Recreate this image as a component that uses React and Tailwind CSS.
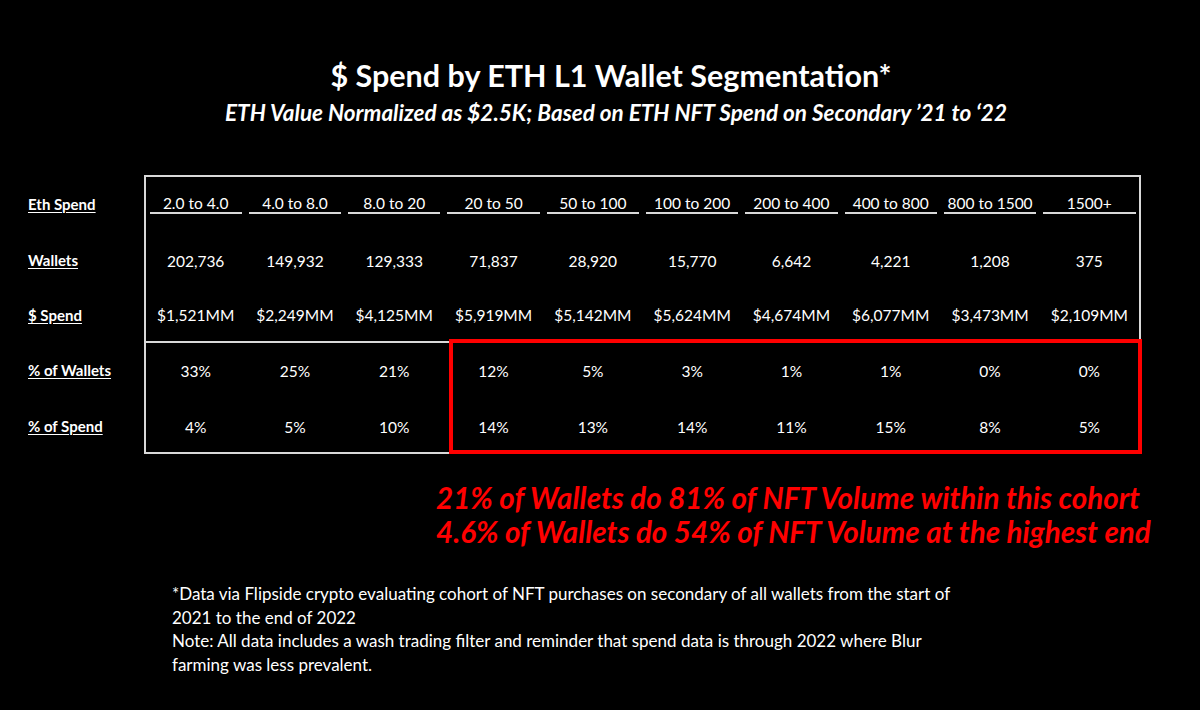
const RANGES = ['2.0 to 4.0', '4.0 to 8.0', '8.0 to 20', '20 to 50', '50 to 100', '100 to 200', '200 to 400', '400 to 800', '800 to 1500', '1500+']
const WALLETS = ['202,736', '149,932', '129,333', '71,837', '28,920', '15,770', '6,642', '4,221', '1,208', '375']
const SPEND = ['$1,521MM', '$2,249MM', '$4,125MM', '$5,919MM', '$5,142MM', '$5,624MM', '$4,674MM', '$6,077MM', '$3,473MM', '$2,109MM']
const PCT_WALLETS = ['33%', '25%', '21%', '12%', '5%', '3%', '1%', '1%', '0%', '0%']
const PCT_SPEND = ['4%', '5%', '10%', '14%', '13%', '14%', '11%', '15%', '8%', '5%']

function ValueRow({ values, className = '' }) {
  return (
    <div className={`grid grid-cols-10 text-[15.5px] leading-[18px] text-center ${className}`}>
      {values.map((v, i) => (
        <div key={i} className="whitespace-nowrap">{v}</div>
      ))}
    </div>
  )
}

export default function App() {
  return (
    <div className="w-[1200px] h-[710px] bg-black text-white overflow-hidden font-[Lato,sans-serif]">
      {/* heading */}
      <div className="pt-[57px] pl-[22px] text-center">
        <h1 className="text-[30.5px] leading-[36px] font-bold">$ Spend by ETH L1 Wallet Segmentation*</h1>
        <p className="mt-[6px] ml-[10px] text-[22.5px] leading-[27px] font-bold italic whitespace-nowrap">
          ETH Value Normalized as $2.5K; Based on ETH NFT Spend on Secondary ’21 to ‘22
        </p>
      </div>

      {/* table */}
      <div className="mt-[49px] flex pl-[28px]">
        <div className="w-[116px] pt-[20px] text-[15px] leading-[18px] font-bold">
          <div className="underline underline-offset-2">Eth Spend</div>
          <div className="mt-[38px] underline underline-offset-2">Wallets</div>
          <div className="mt-[37px] underline underline-offset-2">$ Spend</div>
          <div className="mt-[37px] underline underline-offset-2">% of Wallets</div>
          <div className="mt-[38px] underline underline-offset-2">% of Spend</div>
        </div>

        <div className="relative w-[997px] border-2 border-[#d9d9d9]">
          <div className="h-[164px]">
            <div className="grid grid-cols-10 pt-[17px] text-[15.5px] leading-[18px] text-center">
              {RANGES.map(r => (
                <div key={r} className="px-[3.5px]">
                  <div className="border-b-2 border-[#d9d9d9] whitespace-nowrap">{r}</div>
                </div>
              ))}
            </div>
            <ValueRow values={WALLETS} className="mt-[38px]" />
            <ValueRow values={SPEND} className="mt-[36px]" />
          </div>
          <div className="h-[111px] border-t-2 border-[#d9d9d9] pt-[19px]">
            <ValueRow values={PCT_WALLETS} />
            <ValueRow values={PCT_SPEND} className="mt-[38px]" />
          </div>

          <div className="absolute left-[303px] top-[162px] right-[-3px] bottom-[-2px] border-4 border-[#ff0000]" />
        </div>
      </div>

      {/* callout */}
      <div className="mt-[27px] pl-[436px] text-[29.6px] leading-[34px] font-bold italic text-[#ff0000] whitespace-nowrap">
        <div>21% of Wallets do 81% of NFT Volume within this cohort</div>
        <div>4.6% of Wallets do 54% of NFT Volume at the highest end</div>
      </div>

      {/* footnote */}
      <div className="mt-[33px] pl-[172px] text-[17px] leading-[23.5px] whitespace-nowrap">
        <div>*Data via Flipside crypto evaluating cohort of NFT purchases on secondary of all wallets from the start of</div>
        <div>2021 to the end of 2022</div>
        <div>Note: All data includes a wash trading filter and reminder that spend data is through 2022 where Blur</div>
        <div>farming was less prevalent.</div>
      </div>
    </div>
  )
}
